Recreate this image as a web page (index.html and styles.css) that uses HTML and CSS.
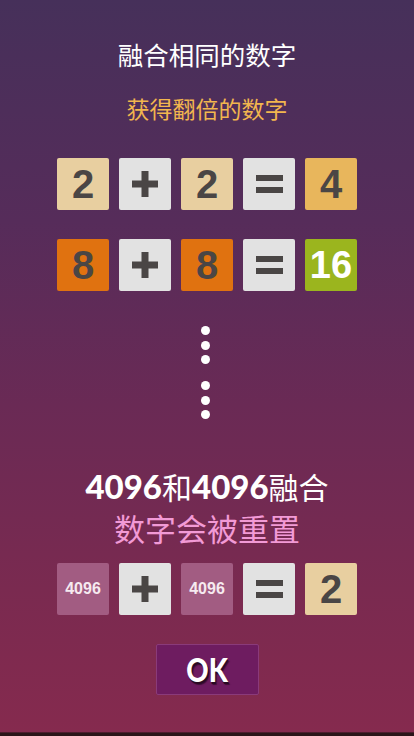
FILE: index.html
```html
<!DOCTYPE html>
<html lang="zh-CN">
<head>
<meta charset="utf-8">
<title>融合相同的数字</title>
<link rel="stylesheet" href="styles.css">
</head>
<body>
<main class="screen">
  <h1 class="title">融合相同的数字</h1>
  <p class="subtitle">获得翻倍的数字</p>

  <div class="row row-first">
    <div class="tile t2">2</div>
    <div class="tile op"><svg viewBox="0 0 26 26" class="icon"><rect x="9.5" y="0" width="7" height="26"/><rect x="0" y="9.5" width="26" height="7"/></svg></div>
    <div class="tile t2">2</div>
    <div class="tile op"><svg viewBox="0 0 27 18" class="icon eq"><rect x="0" y="0" width="27" height="6"/><rect x="0" y="12" width="27" height="6"/></svg></div>
    <div class="tile t4">4</div>
  </div>

  <div class="row row-second">
    <div class="tile t8">8</div>
    <div class="tile op"><svg viewBox="0 0 26 26" class="icon"><rect x="9.5" y="0" width="7" height="26"/><rect x="0" y="9.5" width="26" height="7"/></svg></div>
    <div class="tile t8">8</div>
    <div class="tile op"><svg viewBox="0 0 27 18" class="icon eq"><rect x="0" y="0" width="27" height="6"/><rect x="0" y="12" width="27" height="6"/></svg></div>
    <div class="tile t16">16</div>
  </div>

  <div class="dots">
    <div class="dot-group"><span class="dot"></span><span class="dot"></span><span class="dot"></span></div>
    <div class="dot-group"><span class="dot"></span><span class="dot"></span><span class="dot"></span></div>
  </div>

  <p class="merge"><span class="num">4096</span>和<span class="num">4096</span>融合</p>
  <p class="reset">数字会被重置</p>

  <div class="row row-third">
    <div class="tile t4096">4096</div>
    <div class="tile op"><svg viewBox="0 0 26 26" class="icon"><rect x="9.5" y="0" width="7" height="26"/><rect x="0" y="9.5" width="26" height="7"/></svg></div>
    <div class="tile t4096">4096</div>
    <div class="tile op"><svg viewBox="0 0 27 18" class="icon eq"><rect x="0" y="0" width="27" height="6"/><rect x="0" y="12" width="27" height="6"/></svg></div>
    <div class="tile t2">2</div>
  </div>

  <button class="ok"><span class="ok-label">OK</span></button>
</main>
</body>
</html>
```
FILE: styles.css
```css
html, body {
  margin: 0;
  padding: 0;
}

body {
  width: 414px;
  height: 736px;
  overflow: hidden;
  background: linear-gradient(180deg, #46305a 0%, #562c5a 30%, #6a2a55 55%, #7a2a50 80%, #852a4e 99.4%, #2a1418 99.6%);
  font-family: "Noto Sans CJK SC", "Noto Sans", sans-serif;
}

.screen {
  display: flex;
  flex-direction: column;
  align-items: center;
  padding-top: 39px;
}

.title {
  margin: 0;
  font-size: 25.5px;
  line-height: 30px;
  font-weight: 400;
  color: #ffffff;
}

.subtitle {
  margin: 24px 0 0;
  font-size: 23px;
  line-height: 30px;
  color: #f2b64e;
}

.row {
  display: flex;
  gap: 10px;
}

.row-first { margin-top: 35px; }
.row-second { margin-top: 29px; }
.row-third { margin-top: 15px; }

.tile {
  width: 52px;
  height: 52px;
  border-radius: 2px;
  display: flex;
  align-items: center;
  justify-content: center;
  font-family: "Liberation Sans", Arial, sans-serif;
  font-weight: 700;
  font-size: 40px;
  color: #4a4645;
}

.t2 { background: #e8cfa0; }
.t4 { background: #e8b65c; }
.t8 { background: #e07210; }
.t16 { background: #9bb51e; color: #ffffff; font-size: 38px; }
.t4096 { background: #a25c82; color: #f6eaf0; font-size: 16px; }
.op { background: #e2e2e2; }

.icon {
  width: 26px;
  height: 26px;
  fill: #4a4645;
}

.icon.eq {
  width: 27px;
  height: 18px;
}

.dots {
  margin-top: 35px;
  margin-right: 4px;
  display: flex;
  flex-direction: column;
  gap: 17px;
}

.dot-group {
  display: flex;
  flex-direction: column;
  gap: 5.5px;
}

.dot {
  width: 9px;
  height: 9px;
  border-radius: 50%;
  background: #ffffff;
}

.merge {
  margin: 47px 0 0;
  font-size: 30px;
  line-height: 40px;
  color: #ffffff;
}

.merge .num {
  font-family: "Lato", "Liberation Sans", sans-serif;
  font-weight: 900;
  font-size: 33px;
}

.reset {
  margin: 2px 0 0;
  font-size: 31px;
  line-height: 40px;
  color: #f29ad6;
}

.ok {
  margin-top: 29px;
  width: 103px;
  height: 51px;
  border: 1px solid #8a3a7a;
  border-radius: 2px;
  background: #6e1c60;
  color: #ffffff;
  font-family: "Lato", "Liberation Sans", sans-serif;
  font-weight: 900;
  font-size: 32px;
  line-height: 1;
  padding: 0;
  text-shadow: 1px 2px 0 #2a0a22, 2px 3px 1px rgba(30, 5, 25, 0.6);
}

.ok-label {
  display: inline-block;
  transform: scaleX(0.86);
}
```
